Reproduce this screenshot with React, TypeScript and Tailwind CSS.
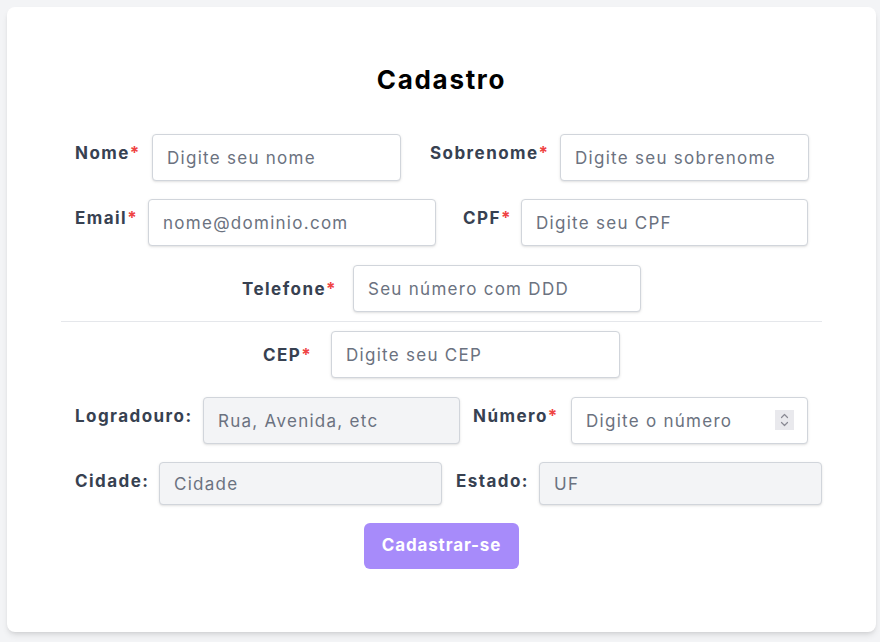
import React from "react";

const font = { fontFamily: "Inter, 'Noto Sans', sans-serif" };

function Label({ text, req, w, top = true }: { text: string; req?: boolean; w: string; top?: boolean }) {
  return (
    <label className={`${w} shrink-0 ${top ? "pt-[7px]" : ""} text-[17px] leading-6 font-bold text-[#374151] tracking-[0.085em]`}>
      {text}
      {req ? <span className="text-[#ef4444]">*</span> : null}
    </label>
  );
}

function Input({ ph, w, disabled, type = "text", h = "h-[47px]" }: { ph: string; w: string; disabled?: boolean; type?: string; h?: string }) {
  return (
    <input
      type={type}
      placeholder={ph}
      disabled={disabled}
      className={`${w} ${h} shrink-0 rounded border border-[#d1d5db] px-[14px] text-[17px] tracking-[0.075em] text-[#374151] placeholder:text-[#6b7280] shadow-sm outline-none ${disabled ? "bg-[#f3f4f6]" : "bg-white"}`}
    />
  );
}

export default function App() {
  return (
    <div className="min-h-[642px] bg-[#f3f4f6] pl-[7px] pt-[7px]" style={font}>
      <div className="w-[869px] h-[625px] rounded-lg bg-white shadow-md pt-[57px] px-[54px]">
        <h1 className="text-center text-[26px] leading-8 font-bold text-black tracking-[0.065em]">Cadastro</h1>

        <div className="mt-[38px] flex pl-[14px]">
          <Label text="Nome" req w="w-[77px]" />
          <Input ph="Digite seu nome" w="w-[249px]" />
          <div className="w-[29px]" />
          <Label text="Sobrenome" req w="w-[130px]" />
          <Input ph="Digite seu sobrenome" w="w-[249px]" />
        </div>

        <div className="mt-[18px] flex pl-[14px]">
          <Label text="Email" req w="w-[73px]" />
          <Input ph="nome@dominio.com" w="w-[288px]" />
          <div className="w-[27px]" />
          <Label text="CPF" req w="w-[58px]" />
          <Input ph="Digite seu CPF" w="w-[287px]" />
        </div>

        <div className="mt-[19px] flex items-center justify-center">
          <Label text="Telefone" req w="w-[111px]" top={false} />
          <Input ph="Seu número com DDD" w="w-[288px]" />
        </div>

        <div className="mt-[9px] border-t border-[#e5e7eb]" />

        <div className="mt-[9px] flex items-center justify-center">
          <Label text="CEP" req w="w-[68px]" top={false} />
          <Input ph="Digite seu CEP" w="w-[289px]" />
        </div>

        <div className="mt-[19px] flex pl-[14px]">
          <Label text="Logradouro:" w="w-[128px]" />
          <Input ph="Rua, Avenida, etc" w="w-[257px]" disabled />
          <div className="w-[13px]" />
          <Label text="Número" req w="w-[98px]" />
          <div className="relative shrink-0">
            <Input ph="Digite o número" w="w-[237px]" />
            <div className="absolute right-[14px] top-[13px] flex h-[20px] w-[19px] flex-col items-center justify-center bg-[#e9e9ed]">
              <svg width="9" height="16" viewBox="0 0 9 16" fill="none" stroke="#8a8a94" strokeWidth="1.2" strokeLinecap="round" strokeLinejoin="round">
                <path d="M1.5 5.5 L4.5 2.5 L7.5 5.5" />
                <path d="M1.5 10.5 L4.5 13.5 L7.5 10.5" />
              </svg>
            </div>
          </div>
        </div>

        <div className="mt-[18px] flex pl-[14px]">
          <Label text="Cidade:" w="w-[84px]" />
          <Input ph="Cidade" w="w-[283px]" h="h-[43px]" disabled />
          <div className="w-[14px]" />
          <Label text="Estado:" w="w-[83px]" />
          <Input ph="UF" w="w-[283px]" h="h-[43px]" disabled />
        </div>

        <div className="mt-[18px] flex justify-center">
          <button className="h-[46px] w-[155px] rounded-md bg-[#a78bfa] text-[17px] font-bold text-white tracking-[0.05em]">
            Cadastrar-se
          </button>
        </div>
      </div>
    </div>
  );
}
